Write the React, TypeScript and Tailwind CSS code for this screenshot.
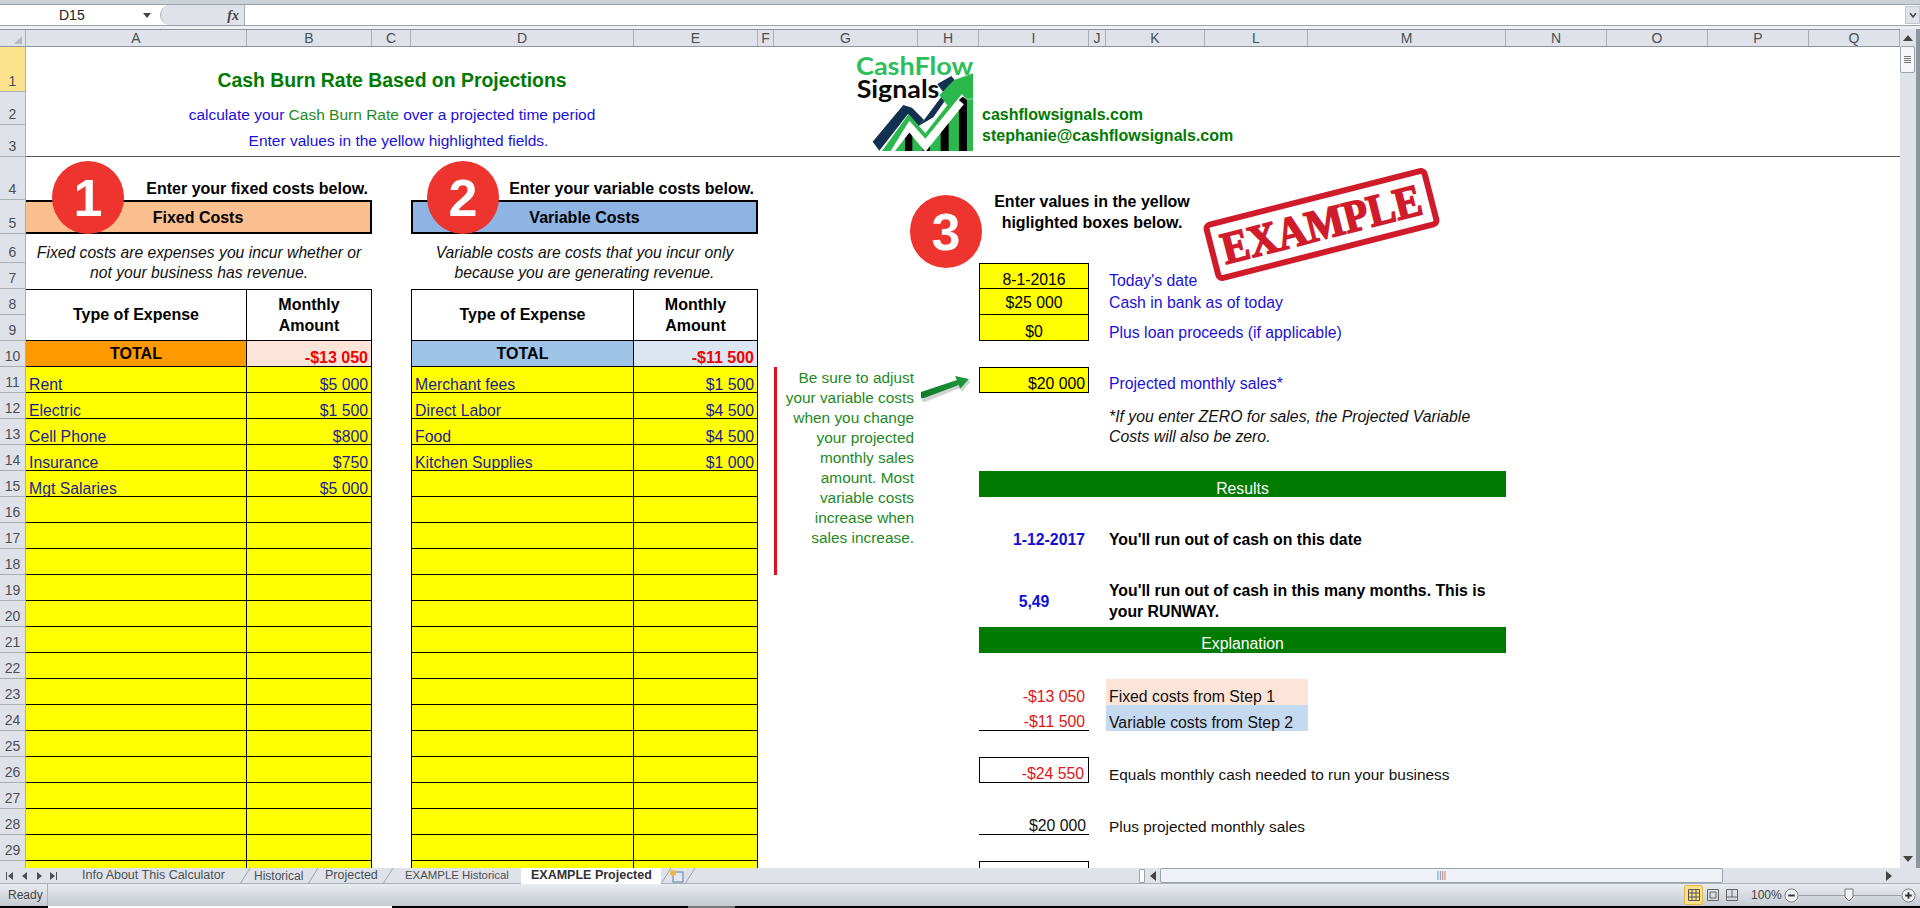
import type { ReactNode } from 'react';

const columns = [
  ['A', 'w-[221px]'],
  ['B', 'w-[125px]'],
  ['C', 'w-[39px]'],
  ['D', 'w-[223px]'],
  ['E', 'w-[124px]'],
  ['F', 'w-[16px]'],
  ['G', 'w-[144px]'],
  ['H', 'w-[61px]'],
  ['I', 'w-[110px]'],
  ['J', 'w-[17px]'],
  ['K', 'w-[99px]'],
  ['L', 'w-[103px]'],
  ['M', 'w-[198px]'],
  ['N', 'w-[101px]'],
  ['O', 'w-[101px]'],
  ['P', 'w-[101px]'],
  ['Q', 'w-[91px]'],
];

const rowHeights = [
  'h-[45px]', 'h-[33px]', 'h-[32px]', 'h-[43px]', 'h-[34px]', 'h-[29px]', 'h-[26px]', 'h-[26px]', 'h-[26px]', 'h-[26px]',
  'h-[26px]', 'h-[26px]', 'h-[26px]', 'h-[26px]', 'h-[26px]', 'h-[26px]', 'h-[26px]', 'h-[26px]', 'h-[26px]', 'h-[26px]',
  'h-[26px]', 'h-[26px]', 'h-[26px]', 'h-[26px]', 'h-[26px]', 'h-[26px]', 'h-[26px]', 'h-[26px]', 'h-[26px]', 'h-[26px]',
];

const fixedRows = [
  ['Rent', '$5 000'],
  ['Electric', '$1 500'],
  ['Cell Phone', '$800'],
  ['Insurance', '$750'],
  ['Mgt Salaries', '$5 000'],
];

const variableRows = [
  ['Merchant fees', '$1 500'],
  ['Direct Labor', '$4 500'],
  ['Food', '$4 500'],
  ['Kitchen Supplies', '$1 000'],
];

const noteLines = [
  'Be sure to adjust',
  'your variable costs',
  'when you change',
  'your projected',
  'monthly sales',
  'amount. Most',
  'variable costs',
  'increase when',
  'sales increase.',
];

function Cell({ className, children }: { className: string; children?: ReactNode }) {
  return <div className={`flex min-w-0 whitespace-nowrap ${className}`}>{children}</div>;
}

function Badge({ n, className }: { n: string; className: string }) {
  return (
    <div className={`absolute flex h-[73px] w-[72px] items-center justify-center rounded-full bg-[#ee342e] text-[52px] font-bold text-white ${className}`}>
      {n}
    </div>
  );
}

function ExpenseTable({
  rows,
  className,
  leftEdge,
  totalLeft,
  totalRight,
  total,
}: {
  rows: string[][];
  className: string;
  leftEdge: string;
  totalLeft: string;
  totalRight: string;
  total: string;
}) {
  const filled = Array.from({ length: 20 }, (_, i) => rows[i] ?? ['', '']);
  return (
    <div className={`row-start-8 row-span-23 grid auto-rows-[26px] ${className}`}>
      <div className={`row-span-2 flex items-center justify-center border-t border-r border-b border-black text-[16px] font-bold text-black ${leftEdge}`}>
        Type of Expense
      </div>
      <div className="row-span-2 flex flex-col items-center justify-center border-t border-r border-b border-black pb-[1px] text-[16px] leading-[21px] font-bold text-black">
        <span>Monthly</span>
        <span>Amount</span>
      </div>
      <div className={`flex items-center justify-center border-r border-b border-black pt-[1px] text-[16px] font-bold text-black ${totalLeft} ${leftEdge}`}>
        TOTAL
      </div>
      <div className={`flex items-end justify-end border-r border-b border-black pr-[3px] text-[16px] leading-[17px] font-bold text-[#f00000] ${totalRight}`}>
        {total}
      </div>
      {filled.map(([name, amount], i) => (
        <div key={i} className="contents">
          <div className={`flex items-end border-r border-b border-black bg-[#ffff00] pl-[3px] text-[15.8px] leading-[15px] text-[#1c1c96] ${leftEdge}`}>
            {name}
          </div>
          <div className="flex items-end justify-end border-r border-b border-black bg-[#ffff00] pr-[3px] text-[15.8px] leading-[15px] text-[#1c1c96]">
            {amount}
          </div>
        </div>
      ))}
    </div>
  );
}

function Logo() {
  return (
    <svg viewBox="0 7 140 104" className="absolute top-0 left-[824px] h-[104px] w-[140px]">
      <defs>
        <clipPath id="logoClip">
          <rect x="0" y="0" width="370" height="333" />
        </clipPath>
      </defs>
      <g transform="scale(0.3333)" clipPath="url(#logoClip)">
        <text x="18" y="104" fontSize="72" fontWeight="700" fill="#2dbe5a" fontFamily="Lato, sans-serif" textLength="352" lengthAdjust="spacingAndGlyphs">
          CashFlow
        </text>
        <text x="20" y="174" fontSize="74" fontWeight="700" fill="#0a0a0a" fontFamily="Lato, sans-serif" textLength="248" lengthAdjust="spacingAndGlyphs">
          Signals
        </text>
        <polygon points="120,333 178,262 226,318 340,178 370,178 370,333" fill="#2bb84c" />
        <polygon points="327,180 338,170 351,180 351,333 327,333" fill="#000" />
        <polygon points="272,240 296,212 296,333 272,333" fill="#000" />
        <rect x="218" y="296" width="22" height="37" fill="#000" />
        <polygon points="165,285 176,268 187,285 187,333 165,333" fill="#000" />
        <polyline points="100,345 178,246 226,304 326,180" fill="none" stroke="#fff" strokeWidth="40" />
        <polygon points="68,305 160,195 186,203 222,240 206,258 174,222 88,332" fill="#12304f" />
        <polygon points="206,258 222,240 282,160 262,132 304,108 322,130 250,232" fill="#12304f" />
        <polygon points="96,333 176,222 226,280 292,196 268,166 312,120 370,100 370,176 346,176 336,162 226,296 178,242 122,333" fill="#2bb84c" />
      </g>
    </svg>
  );
}

function TabEdge() {
  return (
    <svg viewBox="0 0 12 16" className="h-[16px] w-[12px] shrink-0">
      <path d="M0 16 L10 0" stroke="#9aa0a8" fill="none" />
    </svg>
  );
}

function Tabs() {
  return (
    <div className="flex h-[15px] min-w-0 flex-1 items-center whitespace-nowrap text-[12.5px] text-[#4a4f55]">
      <svg viewBox="0 0 60 16" className="h-[16px] w-[60px] shrink-0" fill="#4a4f55">
        <rect x="6" y="4" width="1" height="8" />
        <path d="M13 4 L8 8 L13 12 Z" />
        <path d="M27 4 L22 8 L27 12 Z" />
        <path d="M37 4 L42 8 L37 12 Z" />
        <path d="M50 4 L55 8 L50 12 Z" />
        <rect x="56" y="4" width="1" height="8" />
      </svg>
      <span className="ml-[22px] w-[145px] shrink-0">Info About This Calculator</span>
      <span className="ml-[13px]"><TabEdge /></span>
      <span className="ml-[2px] w-[48px] shrink-0 text-[12px]">Historical</span>
      <span className="ml-[6px]"><TabEdge /></span>
      <span className="ml-[5px] w-[54px] shrink-0">Projected</span>
      <span className="ml-[4px]"><TabEdge /></span>
      <span className="ml-[10px] w-[102px] shrink-0 text-[11.4px]">EXAMPLE Historical</span>
      <div className="ml-[14px] flex h-[16px] w-[140px] shrink-0 items-center bg-white pl-[10px] font-bold text-[#333]">EXAMPLE Projected</div>
      <TabEdge />
      <svg viewBox="0 0 16 14" className="ml-[-4px] h-[14px] w-[16px] shrink-0">
        <rect x="4" y="3" width="10" height="10" fill="#dfe8f4" stroke="#5f7fa8" />
        <circle cx="4" cy="4" r="3" fill="#f2b544" />
      </svg>
      <TabEdge />
    </div>
  );
}

export default function App() {
  return (
    <div className="flex h-[908px] w-[1920px] flex-col overflow-hidden bg-white font-['Liberation_Sans',Arial,sans-serif] text-black">
      <div className="h-[5px] border-b border-[#9aa2ab] bg-[#ccd1d8]" />

      {/* formula bar */}
      <div className="flex h-[20px] items-center bg-white">
        <div className="flex h-full w-[160px] shrink-0 items-center">
          <span className="ml-[59px] text-[14px] text-[#222]">D15</span>
          <svg viewBox="0 0 8 5" className="ml-[58px] h-[5px] w-[8px]" fill="#444">
            <path d="M0 0 H8 L4 5 Z" />
          </svg>
        </div>
        <div className="flex h-full w-[85px] shrink-0 items-center justify-end rounded-l-[10px] border-r border-l border-[#aab0b8] bg-[#dfe3e9] pr-[5px] font-['Liberation_Serif',serif] text-[14px] italic font-bold text-[#444]">
          fx
        </div>
        <div className="flex-1" />
        <div className="flex h-[18px] w-[15px] items-center justify-center border border-[#c3c8cf] bg-[#dfe3e9] text-[#555]">
          <svg viewBox="0 0 8 5" className="h-[5px] w-[8px]" fill="none" stroke="#444" strokeWidth="1.5">
            <path d="M1 0 L4 4 L7 0" />
          </svg>
        </div>
      </div>
      <div className="h-[4px] border-t border-[#9aa2ab] bg-[#edeff2]" />

      {/* sheet */}
      <div className="flex h-[839px] min-h-0">
        <div className="flex min-w-0 flex-col">
          <div className="flex h-[18px] shrink-0 border-t border-b border-[#8f959c] bg-[#dfe3e9]">
            <div className="relative w-[26px] shrink-0 border-r border-[#a9aeb5]">
              <svg viewBox="0 0 8 8" className="absolute right-[3px] bottom-[2px] h-[8px] w-[8px]" fill="#b6bbc2">
                <path d="M8 0 V8 H0 Z" />
              </svg>
            </div>
            {columns.map(([name, width]) => (
              <div key={name} className={`flex shrink-0 items-center justify-center border-r border-[#a9aeb5] text-[14px] text-[#4b4f55] ${width}`}>
                {name}
              </div>
            ))}
          </div>

          <div className="flex min-h-0 flex-1 overflow-hidden">
            <div className="flex w-[26px] shrink-0 flex-col">
              {rowHeights.map((h, i) => (
                <div
                  key={i}
                  className={`flex shrink-0 items-end justify-center border-r border-b border-[#a9aeb5] pb-[2px] text-[14px] leading-[16px] text-[#4b4f55] ${h} ${i === 0 ? 'bg-[#fbe38e]' : 'bg-[#dfe3e9]'}`}
                >
                  {i < 29 ? i + 1 : ''}
                </div>
              ))}
            </div>

            <div className="relative grid h-[821px] flex-1 grid-cols-[221px_125px_39px_223px_124px_16px_144px_61px_110px_17px_99px_103px_198px_101px_101px_101px_91px] grid-rows-[45px_33px_32px_43px_34px_29px_repeat(24,26px)] overflow-hidden text-[15.8px]">
              {/* title block */}
              <Cell className="col-start-1 col-span-5 row-start-1 items-end justify-center text-[19.4px] leading-[22px] font-bold text-[#007a00]">
                <span className="pb-[1px]">Cash Burn Rate Based on Projections</span>
              </Cell>
              <Cell className="col-start-1 col-span-5 row-start-2 items-end justify-center text-[15.5px] leading-[19px] text-[#1a10d8]">
                <span className="pb-[1px]">
                  calculate your <span className="text-[#1e8a1e]">Cash Burn Rate</span> over a projected time period
                </span>
              </Cell>
              <Cell className="col-start-1 col-span-5 row-start-3 items-center justify-center pb-[2px] pl-[13px] text-[15.5px] leading-[19px] text-[#1a10d8]">
                Enter values in the yellow highlighted fields.
              </Cell>
              <Cell className="col-start-9 col-span-5 row-start-2 row-span-2 flex-col justify-center pl-[3px] text-[16px] leading-[21px] font-bold text-[#007a00]">
                <span>cashflowsignals.com</span>
                <span>stephanie@cashflowsignals.com</span>
              </Cell>
              <div className="col-span-full col-start-1 row-start-3 self-end border-b border-[#555]" />

              {/* step headers */}
              <Cell className="col-start-1 col-span-2 row-start-4 items-end justify-end pr-[4px] text-[16px] leading-[23px] font-bold">
                Enter your fixed costs below.
              </Cell>
              <Cell className="col-start-4 col-span-2 row-start-4 items-end justify-end pr-[4px] text-[16px] leading-[23px] font-bold">
                Enter your variable costs below.
              </Cell>
              <Cell className="col-start-1 col-span-2 row-start-5 items-center justify-center border-y-2 border-r-2 border-black bg-[#fabf8f] pt-[1px] text-[16px] font-bold">
                Fixed Costs
              </Cell>
              <Cell className="col-start-4 col-span-2 row-start-5 items-center justify-center border-2 border-black bg-[#8db4e2] pt-[1px] text-[16px] font-bold">
                Variable Costs
              </Cell>
              <Cell className="col-start-1 col-span-2 row-start-6 row-span-2 flex-col items-center justify-center pt-[2px] text-[15.7px] leading-[20px] italic text-[#111]">
                <span>Fixed costs are expenses you incur whether or</span>
                <span>not your business has revenue.</span>
              </Cell>
              <Cell className="col-start-4 col-span-2 row-start-6 row-span-2 flex-col items-center justify-center pt-[2px] text-[15.7px] leading-[20px] italic text-[#111]">
                <span>Variable costs are costs that you incur only</span>
                <span>because you are generating revenue.</span>
              </Cell>

              <ExpenseTable
                rows={fixedRows}
                className="col-start-1 col-span-2 grid-cols-[221px_125px]"
                leftEdge=""
                totalLeft="bg-[#ff9900]"
                totalRight="bg-[#fde4d8]"
                total="-$13 050"
              />
              <ExpenseTable
                rows={variableRows}
                className="col-start-4 col-span-2 grid-cols-[223px_124px]"
                leftEdge="border-l"
                totalLeft="bg-[#9dc3e6]"
                totalRight="bg-[#dce6f1]"
                total="-$11 500"
              />

              {/* note beside the tables */}
              <Cell className="col-start-7 row-start-11 row-span-8 flex-col items-end border-l-[3px] border-[#e01020] pt-[1px] pr-[4px] text-[15.4px] leading-[20px] text-[#1e8a1e]">
                {noteLines.map((line) => (
                  <span key={line}>{line}</span>
                ))}
              </Cell>

              {/* step 3 */}
              <Cell className="col-start-9 col-span-3 row-start-4 row-span-2 flex-col items-center justify-end pb-[1px] text-[16px] leading-[21px] font-bold">
                <span>Enter values in the yellow</span>
                <span>higlighted boxes below.</span>
              </Cell>
              <Cell className="col-start-9 row-start-7 items-end justify-center border border-black bg-[#ffff00] leading-[16px]">8-1-2016</Cell>
              <Cell className="col-start-9 row-start-8 items-center justify-center border-x border-b border-black bg-[#ffff00] pt-[2px]">$25 000</Cell>
              <Cell className="col-start-9 row-start-9 items-end justify-center border-x border-b border-black bg-[#ffff00] leading-[16px]">$0</Cell>
              <Cell className="col-start-9 row-start-11 items-end justify-end border border-black bg-[#ffff00] pr-[3px] leading-[17px]">$20 000</Cell>

              <Cell className="col-start-11 col-span-3 row-start-7 items-end pl-[3px] leading-[16px] text-[#1a10d8]">Today's date</Cell>
              <Cell className="col-start-11 col-span-3 row-start-8 items-center pt-[2px] pl-[3px] text-[#1a10d8]">Cash in bank as of today</Cell>
              <Cell className="col-start-11 col-span-3 row-start-9 items-end pl-[3px] leading-[16px] text-[#1a10d8]">Plus loan proceeds (if applicable)</Cell>
              <Cell className="col-start-11 col-span-3 row-start-11 items-end pl-[3px] leading-[19px] text-[#1a10d8]">Projected monthly sales*</Cell>
              <Cell className="col-start-11 col-span-3 row-start-12 row-span-2 flex-col pt-[14px] pl-[3px] leading-[20px] italic text-[#111]">
                <span>*If you enter ZERO for sales, the Projected Variable</span>
                <span>Costs will also be zero.</span>
              </Cell>

              <Cell className="col-start-9 col-span-5 row-start-15 items-end justify-center bg-[#007a00] leading-[16px] text-white">Results</Cell>
              <Cell className="col-start-9 row-start-17 items-end justify-end pr-[4px] leading-[19px] font-bold text-[#1010d8]">1-12-2017</Cell>
              <Cell className="col-start-11 col-span-3 row-start-17 items-end pl-[3px] leading-[19px] font-bold">You'll run out of cash on this date</Cell>
              <Cell className="col-start-9 row-start-19 row-span-2 items-center justify-center pt-[2px] font-bold text-[#1010d8]">5,49</Cell>
              <Cell className="col-start-11 col-span-3 row-start-19 row-span-2 flex-col justify-end pb-[5px] pl-[3px] leading-[21px] font-bold">
                <span>You'll run out of cash in this many months. This is</span>
                <span>your RUNWAY.</span>
              </Cell>
              <Cell className="col-start-9 col-span-5 row-start-21 items-end justify-center bg-[#007a00] leading-[18px] text-white">Explanation</Cell>

              <Cell className="col-start-9 row-start-23 items-end justify-end pr-[4px] leading-[16px] text-[#e01515]">-$13 050</Cell>
              <Cell className="col-start-11 col-span-2 row-start-23 items-end bg-[#fde4d8] pl-[3px] leading-[16px] text-[#111]">Fixed costs from Step 1</Cell>
              <Cell className="col-start-9 row-start-24 items-end justify-end border-b border-black pr-[4px] leading-[16px] text-[#e01515]">-$11 500</Cell>
              <Cell className="col-start-11 col-span-2 row-start-24 items-end bg-[#c5d9f1] pl-[3px] leading-[16px] text-[#111]">Variable costs from Step 2</Cell>
              <Cell className="col-start-9 row-start-26 items-end justify-end border border-black pr-[4px] leading-[16px] text-[#e01515]">-$24 550</Cell>
              <Cell className="col-start-11 col-span-3 row-start-26 items-end pl-[3px] text-[15.4px] leading-[16px] text-[#111]">Equals monthly cash needed to run your business</Cell>
              <Cell className="col-start-9 row-start-28 items-end justify-end border-b border-black pr-[3px] leading-[16px] text-[#111]">$20 000</Cell>
              <Cell className="col-start-11 col-span-3 row-start-28 items-end pl-[3px] text-[15.4px] leading-[16px] text-[#111]">Plus projected monthly sales</Cell>
              <Cell className="col-start-9 row-start-30 border border-black" />

              {/* floating shapes */}
              <Badge n="1" className="top-[114px] left-[26px]" />
              <Badge n="2" className="top-[114px] left-[401px]" />
              <Badge n="3" className="top-[148px] left-[884px]" />
              <Logo />
              <div className="absolute top-[147px] left-[1180px] flex h-[61px] w-[231px] rotate-[-14.3deg] items-center justify-center rounded-[7px] border-[6px] border-[#d01c2a] font-['Liberation_Serif',serif] text-[41px] leading-none font-bold text-[#d01c2a] [-webkit-text-stroke:1.5px_#d01c2a]">
                <span className="scale-y-110">EXAMPLE</span>
              </div>
              <svg viewBox="0 0 54 26" className="absolute top-[329px] left-[893px] h-[26px] w-[54px]">
                <defs>
                  <linearGradient id="arrowFill" x1="0" x2="1" y1="0" y2="0">
                    <stop offset="0" stopColor="#0f7a28" />
                    <stop offset="1" stopColor="#1f9a3c" />
                  </linearGradient>
                </defs>
                <path d="M2 24 L2 17 L38 5 L36 0 L51 3 L42 14 L40 10 L5 24 Z" fill="#9aa0a0" opacity="0.45" transform="translate(1 2)" />
                <path d="M2 22 L2 16 L38 4 L36 0 L50 3 L41 13 L40 9 L5 22 Z" fill="url(#arrowFill)" />
              </svg>
            </div>
          </div>
        </div>

        {/* vertical scrollbar */}
        <div className="flex h-full w-[20px] shrink-0 flex-col items-start border-r-[4px] border-[#8f959c] bg-[#dfe3e9]">
          <svg viewBox="0 0 10 6" className="mt-[6px] ml-[3px] h-[6px] w-[10px]" fill="#444">
            <path d="M5 0 L10 6 H0 Z" />
          </svg>
          <div className="mt-[5px] flex h-[27px] w-[15px] flex-col items-center justify-center gap-[1px] rounded-[2px] border border-[#9aa2ab] bg-[#f4f6f8]">
            <span className="h-px w-[7px] bg-[#777]" />
            <span className="h-px w-[7px] bg-[#777]" />
            <span className="h-px w-[7px] bg-[#777]" />
            <span className="h-px w-[7px] bg-[#777]" />
          </div>
          <svg viewBox="0 0 10 6" className="mt-auto mb-[6px] ml-[3px] h-[6px] w-[10px]" fill="#444">
            <path d="M5 6 L10 0 H0 Z" />
          </svg>
        </div>
      </div>

      {/* tabs + horizontal scrollbar */}
      <div className="flex h-[16px] shrink-0 border-b border-[#aab0b8] bg-[#dfe3e9]">
        <Tabs />
        <div className="flex h-[15px] w-[1222px] shrink-0 items-center pl-[441px]">
          <span className="h-[14px] w-[6px] rounded-[1px] border border-[#9aa2ab] bg-white" />
          <svg viewBox="0 0 6 10" className="ml-[5px] h-[10px] w-[6px]" fill="#444">
            <path d="M6 0 V10 L0 5 Z" />
          </svg>
          <div className="ml-[4px] flex h-[15px] w-[563px] items-center justify-center rounded-[2px] border border-[#9aa2ab] bg-[#eef1f5]">
            <span className="text-[9px] leading-none text-[#777]">||||</span>
          </div>
          <svg viewBox="0 0 6 10" className="ml-[163px] h-[10px] w-[6px]" fill="#444">
            <path d="M0 0 V10 L6 5 Z" />
          </svg>
        </div>
      </div>

      {/* status bar */}
      <div className="flex h-[22px] shrink-0 items-center bg-gradient-to-b from-[#e9ecf0] to-[#c6cbd2] text-[12px] text-[#444]">
        <div className="flex h-full w-[48px] items-center border-r border-[#a9aeb5] pl-[8px]">Ready</div>
        <div className="flex-1" />
        <div className="flex h-[20px] w-[19px] items-center justify-center rounded-[2px] border border-[#e2b84d] bg-[#fbe08a]">
          <svg viewBox="0 0 12 12" className="h-[12px] w-[12px]" fill="none" stroke="#555">
            <path d="M0.5 0.5H11.5V11.5H0.5Z M4 0.5V11.5 M8 0.5V11.5 M0.5 4H11.5 M0.5 8H11.5" />
          </svg>
        </div>
        <svg viewBox="0 0 12 12" className="ml-[4px] h-[12px] w-[12px]" fill="none" stroke="#666">
          <path d="M0.5 0.5H11.5V11.5H0.5Z M3 3H9V9H3Z" />
        </svg>
        <svg viewBox="0 0 12 12" className="ml-[7px] h-[12px] w-[12px]" fill="none" stroke="#666">
          <path d="M0.5 0.5H11.5V11.5H0.5Z M6 0.5V8 M0.5 8H11.5" />
        </svg>
        <span className="ml-[13px] w-[27px]">100%</span>
        <svg viewBox="0 0 16 16" className="ml-[6px] h-[15px] w-[15px]" fill="#eef0f3" stroke="#777">
          <circle cx="8" cy="8" r="7" />
          <path d="M4.5 8H11.5" stroke="#333" strokeWidth="2" />
        </svg>
        <div className="relative flex h-[15px] w-[102px] items-center">
          <div className="h-px w-full bg-[#9aa0a8]" />
          <svg viewBox="0 0 10 14" className="absolute top-0 left-[45px] h-[14px] w-[10px]" fill="#eef0f3" stroke="#777">
            <path d="M1 1H9V9L5 13L1 9Z" />
          </svg>
        </div>
        <svg viewBox="0 0 16 16" className="mr-[4px] h-[15px] w-[15px]" fill="#eef0f3" stroke="#777">
          <circle cx="8" cy="8" r="7" />
          <path d="M4.5 8H11.5 M8 4.5V11.5" stroke="#333" strokeWidth="2" />
        </svg>
      </div>
      <div className="flex h-[2px] shrink-0 bg-black">
        <div className="ml-[48px] w-[344px] bg-white" />
        <div className="ml-[296px] w-[47px] bg-[#777]" />
      </div>
    </div>
  );
}
